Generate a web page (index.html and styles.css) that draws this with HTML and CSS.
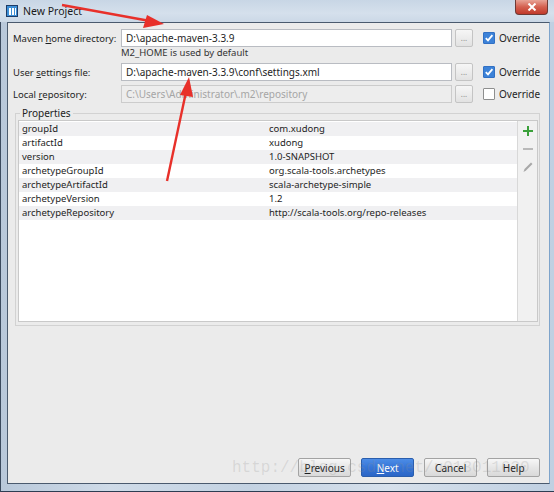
FILE: index.html
```html
<!DOCTYPE html>
<html>
<head>
<meta charset="utf-8">
<link rel="stylesheet" href="styles.css">
</head>
<body>
<div class="window">
  <div class="titlebar">
    <svg class="appicon" width="12" height="12" viewBox="0 0 12 12">
      <rect x="0" y="0" width="12" height="12" fill="#1d3b66"/>
      <rect x="1" y="1" width="10" height="10" fill="#3d8fd6"/>
      <rect x="3" y="3" width="2" height="7" fill="#fff"/>
      <rect x="6" y="3" width="2" height="7" fill="#fff"/>
      <rect x="9" y="3" width="1" height="7" fill="#fff"/>
    </svg>
    <span class="title">New Project</span>
    <div class="close">
      <svg width="10" height="8" viewBox="0 0 10 8"><path d="M1.5 0.5 L8.5 7.5 M8.5 0.5 L1.5 7.5" stroke="#fff" stroke-width="2"/></svg>
    </div>
  </div>
  <div class="frame">
    <div class="client">
      <div class="row">
        <label class="lbl">Maven <u>h</u>ome directory:</label>
        <div class="input">D:\apache-maven-3.3.9</div>
        <div class="browse">...</div>
        <div class="chk on"><svg width="10" height="10" viewBox="0 0 10 10"><path d="M1.8 5.2 L4 7.4 L8.4 2.2" fill="none" stroke="#fff" stroke-width="1.8"/></svg></div>
        <span class="ovr">Override</span>
      </div>
      <div class="hint">M2_HOME is used by default</div>
      <div class="row">
        <label class="lbl">User <u>s</u>ettings file:</label>
        <div class="input">D:\apache-maven-3.3.9\conf\settings.xml</div>
        <div class="browse">...</div>
        <div class="chk on"><svg width="10" height="10" viewBox="0 0 10 10"><path d="M1.8 5.2 L4 7.4 L8.4 2.2" fill="none" stroke="#fff" stroke-width="1.8"/></svg></div>
        <span class="ovr">Override</span>
      </div>
      <div class="row r3">
        <label class="lbl">Local <u>r</u>epository:</label>
        <div class="input dis">C:\Users\Administrator\.m2\repository</div>
        <div class="browse">...</div>
        <div class="chk"></div>
        <span class="ovr">Override</span>
      </div>
      <fieldset class="props">
        <legend>Properties</legend>
        <div class="tablebox">
          <div class="table">
            <div class="tr"><span>groupId</span><span>com.xudong</span></div>
            <div class="tr"><span>artifactId</span><span>xudong</span></div>
            <div class="tr"><span>version</span><span>1.0-SNAPSHOT</span></div>
            <div class="tr"><span>archetypeGroupId</span><span>org.scala-tools.archetypes</span></div>
            <div class="tr"><span>archetypeArtifactId</span><span>scala-archetype-simple</span></div>
            <div class="tr"><span>archetypeVersion</span><span>1.2</span></div>
            <div class="tr"><span>archetypeRepository</span><span>http://scala-tools.org/repo-releases</span></div>
          </div>
          <div class="tools">
            <svg width="12" height="12" viewBox="0 0 12 12"><path d="M6 1 V11 M1 6 H11" stroke="#3aa03a" stroke-width="2"/></svg>
            <svg width="12" height="12" viewBox="0 0 12 12"><path d="M1 6 H11" stroke="#acacac" stroke-width="1.6"/></svg>
            <svg width="12" height="12" viewBox="0 0 12 12"><path d="M1.5 11 L2.5 8 L9 1.5 L10.5 3 L4 9.5 Z" fill="#a8a8a8"/></svg>
          </div>
        </div>
      </fieldset>
      <div class="buttons">
        <button class="btn"><u>P</u>revious</button>
        <button class="btn primary"><u>N</u>ext</button>
        <button class="btn">Cancel</button>
        <button class="btn">Help</button>
      </div>
    </div>
  </div>
  <div class="watermark">http://blog.csdn.net/u013011630</div>
  <svg class="arrows" width="554" height="492" viewBox="0 0 554 492">
    <path d="M62 5 L150 21" stroke="#e8302a" stroke-width="2.4" fill="none"/>
    <path d="M164 24 L143 28 L147 15 Z" fill="#e8302a"/>
    <path d="M167 181 L186 92" stroke="#e8302a" stroke-width="2.4" fill="none"/>
    <path d="M189 77 L180 95 L193 97 Z" fill="#e8302a"/>
  </svg>
</div>
</body>
</html>
```
FILE: styles.css
```css
html, body {
  margin: 0;
  padding: 0;
}
body {
  width: 554px;
  height: 492px;
  overflow: hidden;
  font-family: "Noto Sans", "DejaVu Sans", sans-serif;
  font-size: 9.5px;
  color: #1e1e1e;
}
.window {
  position: relative;
  width: 554px;
  height: 492px;
  display: flex;
  flex-direction: column;
  background: linear-gradient(90deg, #b8c8da 0%, #cfdbe8 20%, #c3d2e2 45%, #d6e0eb 70%, #c0d0e2 100%);
}
.titlebar {
  height: 22px;
  display: flex;
  align-items: center;
  padding-left: 6px;
  background: linear-gradient(180deg, #c8d6e5 0%, #d5e0ec 60%, #cbd8e6 100%);
}
.appicon {
  margin-right: 4px;
  margin-top: -1px;
}
.title {
  font-size: 10.5px;
  color: #1a1a1a;
  margin-left: 1px;
}
.close {
  margin-left: auto;
  margin-right: 6px;
  align-self: flex-start;
  width: 33px;
  height: 15px;
  border: 1px solid #6e3a35;
  border-top: none;
  border-radius: 0 0 4px 4px;
  background: linear-gradient(180deg, #e8a396 0%, #d4604f 50%, #c0392b 100%);
  display: flex;
  align-items: center;
  justify-content: center;
  box-sizing: border-box;
}
.frame {
  flex: 1;
  display: flex;
  padding: 0 6px 7px 6px;
  border-left: 1px solid #3b4a5e;
  border-bottom: 1px solid #2d3d52;
}
.client {
  flex: 1;
  display: flex;
  flex-direction: column;
  background: #ebebeb;
  border: 1px solid #4a5a6e;
  border-right-color: #7ea4cb;
  padding: 6px 9px 6px 5px;
}
.row {
  display: flex;
  align-items: center;
  height: 18px;
  white-space: nowrap;
}
.lbl {
  width: 108px;
  flex: none;
  font-size: 9.5px;
}
.input {
  width: 331px;
  height: 18px;
  box-sizing: border-box;
  background: #fff;
  border: 1px solid #b9bcc2;
  padding: 0 4px;
  line-height: 16px;
  white-space: nowrap;
  overflow: hidden;
  font-size: 10px;
}
.input.dis {
  background: #ededed;
  border-color: #cccccc;
  color: #a5a5a5;
}
.browse {
  width: 18px;
  height: 18px;
  box-sizing: border-box;
  margin-left: 3px;
  border: 1px solid #c4c4c4;
  background: linear-gradient(#f6f6f6, #e2e2e2);
  border-radius: 2px;
  font-size: 8px;
  line-height: 12px;
  color: #8a8a8a;
  display: flex;
  align-items: center;
  justify-content: center;
}
.chk {
  width: 12px;
  height: 12px;
  box-sizing: border-box;
  margin-left: 10px;
  border: 1px solid #8e8f8f;
  background: #fff;
  border-radius: 1px;
  display: flex;
  align-items: center;
  justify-content: center;
}
.chk.on {
  background: #3c82d8;
  border-color: #3170c4;
}
.ovr {
  margin-left: 4px;
  font-size: 10px;
}
.hint {
  height: 16px;
  line-height: 11px;
  padding-left: 108px;
  color: #333;
}
.r3 {
  margin-top: 4px;
}
.props {
  margin: 4px 0 0 2px;
  padding: 0 1px 3px 2px;
  border: 1px solid #d2d2d2;
  min-width: 0;
}
.props legend {
  padding: 0 2px;
  margin-left: 2px;
  line-height: 12px;
  color: #222;
  font-size: 10px;
}
.tablebox {
  display: flex;
  height: 202px;
  margin-top: 1px;
  border: 1px solid #c9c9c9;
  box-sizing: border-box;
  background: #fff;
}
.table {
  flex: 1;
  padding-top: 1px;
}
.tr {
  display: grid;
  grid-template-columns: 248px 1fr;
  height: 14px;
  line-height: 14px;
}
.tr span:first-child {
  padding-left: 3px;
}
.tr span:last-child {
  padding-left: 2px;
}
.tr:nth-child(odd) {
  background: #f0f0f2;
}
.tools {
  width: 19px;
  flex: none;
  border-left: 1px solid #d8d8d8;
  background: #f1f1f1;
  display: flex;
  flex-direction: column;
  align-items: center;
  gap: 6px;
  padding-top: 4px;
}
.buttons {
  margin-top: auto;
  display: flex;
  justify-content: flex-end;
  gap: 10px;
}
.btn {
  width: 53px;
  height: 19px;
  padding: 0;
  font-family: "Noto Sans", "DejaVu Sans", sans-serif;
  font-size: 10px;
  color: #1e1e1e;
  border: 1px solid #a3a3a3;
  border-radius: 2px;
  background: linear-gradient(180deg, #f7f7f7 0%, #e6e6e6 50%, #d9d9d9 100%);
}
.btn.primary {
  background: linear-gradient(180deg, #4d8de6 0%, #3575d8 50%, #2c66c6 100%);
  border-color: #2a5ead;
  color: #fff;
}
.watermark {
  position: absolute;
  left: 232px;
  top: 459px;
  font-family: "Liberation Mono", monospace;
  font-size: 16px;
  color: rgba(140, 140, 140, 0.22);
  white-space: nowrap;
  pointer-events: none;
}
.arrows {
  position: absolute;
  left: 0;
  top: 0;
  pointer-events: none;
}
```
